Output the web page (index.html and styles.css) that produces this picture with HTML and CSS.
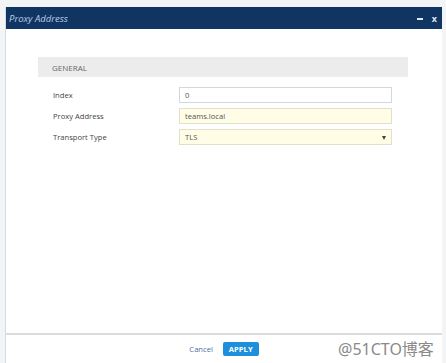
FILE: index.html
```html
<!DOCTYPE html>
<html>
<head>
<meta charset="utf-8">
<link rel="stylesheet" href="styles.css">
</head>
<body>
<div class="dialog">
  <div class="titlebar">
    <span class="title">Proxy Address</span>
    <span class="controls"><span class="min"></span><span class="close">x</span></span>
  </div>
  <div class="content">
    <div class="section">GENERAL</div>
    <div class="rows">
      <div class="row"><span class="label">Index</span><div class="field">0</div></div>
      <div class="row"><span class="label">Proxy Address</span><div class="field yellow">teams.local</div></div>
      <div class="row"><span class="label">Transport Type</span><div class="field yellow select">TLS<span class="arrow"></span></div></div>
    </div>
  </div>
  <div class="footer">
    <span class="cancel">Cancel</span>
    <span class="apply">APPLY</span>
  </div>
</div>
<div class="watermark">@51CTO博客</div>
</body>
</html>
```
FILE: styles.css
```css
html, body { margin: 0; padding: 0; }
body {
  width: 446px; height: 363px; overflow: hidden;
  background: #f2f4f6;
  font-family: "Open Sans", "Noto Sans", sans-serif;
  position: relative;
}
.dialog {
  margin: 7px 0 0 5px;
  width: 437px; height: 356px;
  background: #fff;
  border-left: 1px solid #d6dbe0;
  box-sizing: border-box;
  display: flex; flex-direction: column;
}
.titlebar {
  height: 22px; background: #113562;
  display: flex; align-items: center; justify-content: space-between;
  padding: 0 5px 0 3px;
}
.title { color: #b8cde8; font-style: italic; font-size: 9.5px; }
.controls { display: flex; align-items: center; gap: 9px; color: #dfe7f2; font-size: 9px; font-weight: bold; }
.min { width: 6px; height: 2px; background: #dfe7f2; margin-top: 2px; }
.close { line-height: 1; }
.content { flex: 1; padding: 28px 34px 0 32px; }
.section {
  height: 20px; background: #ececec;
  padding-left: 14px; display: flex; align-items: center;
  font-size: 8px; color: #666;
}
.rows { padding: 10px 15px 0 15px; display: flex; flex-direction: column; gap: 5px; }
.row { display: flex; align-items: center; height: 16px; }
.label { width: 126px; font-size: 7.6px; color: #444; }
.field {
  width: 213px; height: 16px; box-sizing: border-box;
  border: 1px solid #d4d8dc; background: #fff;
  font-size: 7.6px; color: #555; padding-left: 5px;
  display: flex; align-items: center; position: relative;
}
.field.yellow { background: #fffde6; border-color: #e0e0cc; }
.arrow {
  position: absolute; right: 5px; top: 6px;
  border-left: 2.5px solid transparent; border-right: 2.5px solid transparent;
  border-top: 4px solid #444;
}
.footer {
  height: 27px; border-top: 2px solid #dcdcdc;
  display: flex; align-items: center; justify-content: center; gap: 10px;
  padding-bottom: 1px;
}
.cancel { color: #4a6ea0; font-size: 7.6px; }
.apply {
  background: #1d8fdb; color: #fff; font-size: 7.6px; font-weight: bold;
  border-radius: 2px; padding: 2px 6px; line-height: 10px;
}
.watermark {
  position: absolute; left: 338px; top: 336px;
  font-family: "Noto Sans", "Noto Sans CJK SC", sans-serif;
  font-size: 16px; color: #8a8a8a;
}
```
